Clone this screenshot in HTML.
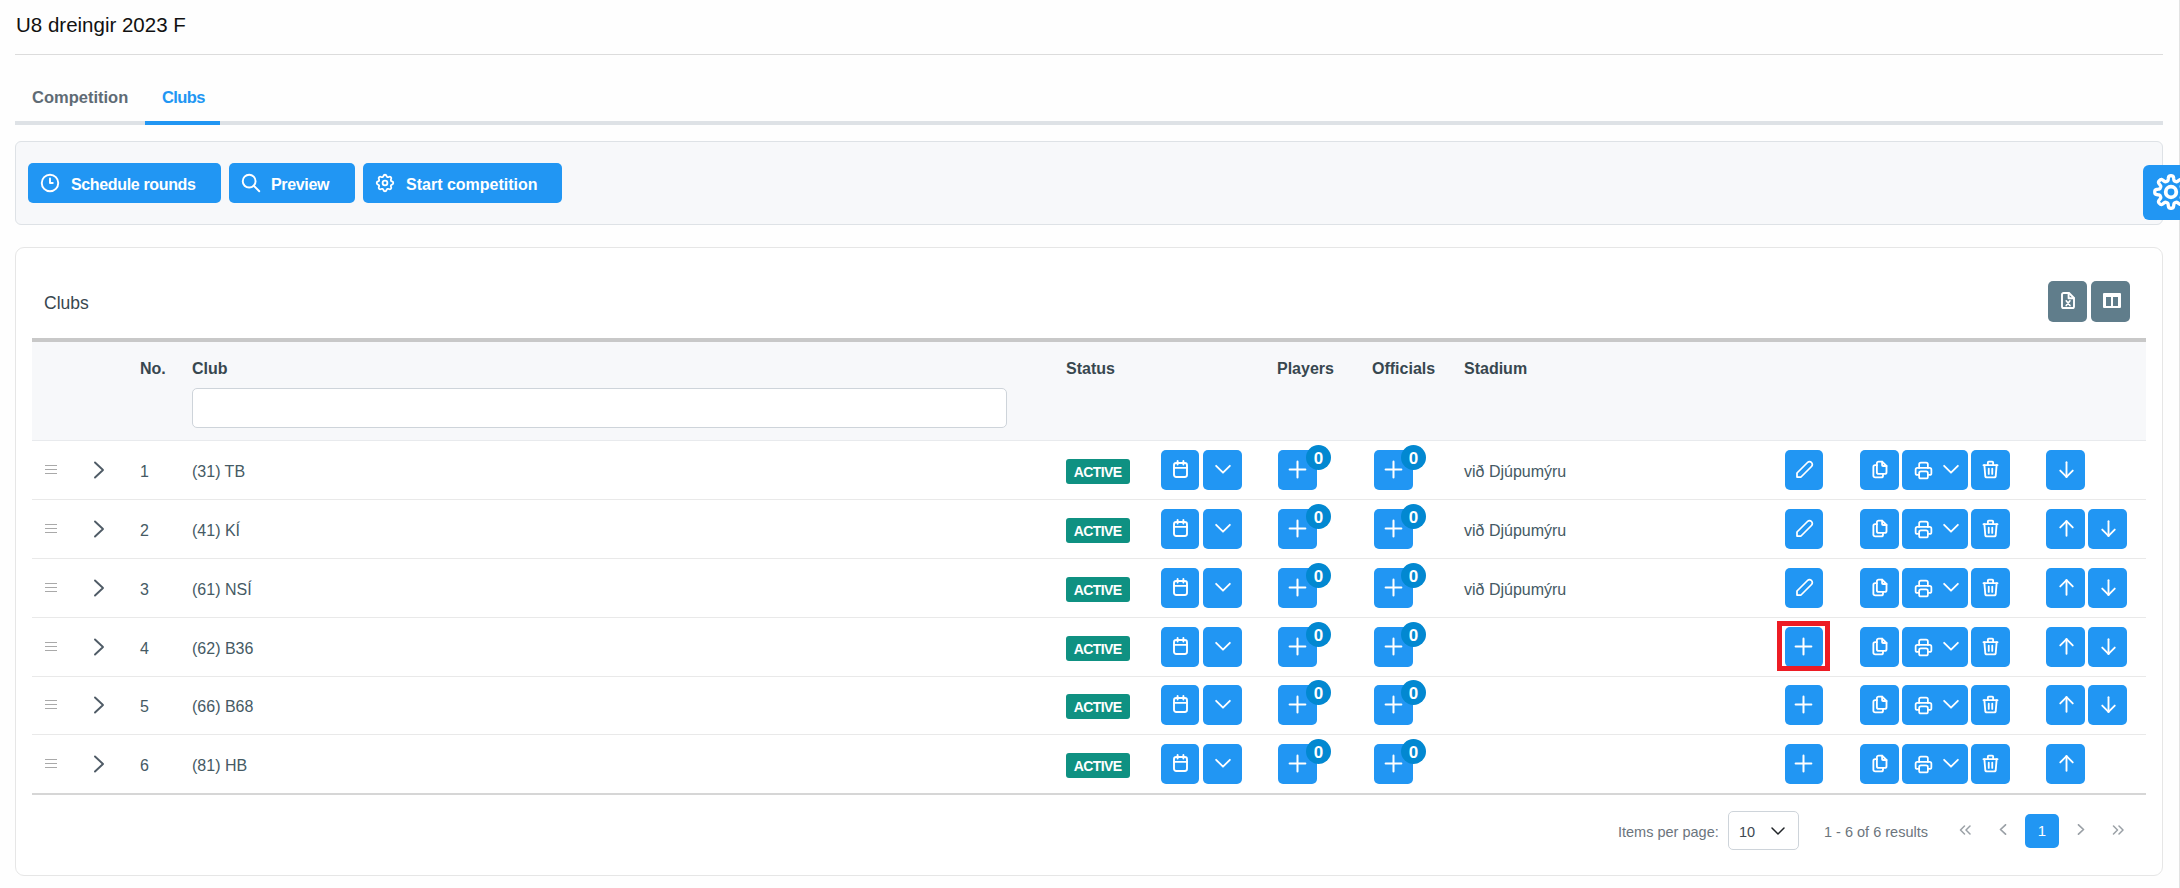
<!DOCTYPE html>
<html><head><meta charset="utf-8"><title>Clubs</title><style>
*{box-sizing:border-box;margin:0;padding:0}
html,body{width:2180px;height:888px;overflow:hidden;background:#fefefe;font-family:"Liberation Sans",sans-serif;position:relative}
div,svg.ic{position:absolute}
.title{left:16px;top:10px;font-size:20.5px;line-height:30px;color:#111}
.hr1{left:15px;top:54px;width:2148px;height:1px;background:#dcdcdc}
.tab1,.tab2{top:86px;font-size:16.5px;font-weight:700;line-height:22px;color:#5f6b75}
.tab1{left:32px}
.tab2{left:162px;color:#2196f3;letter-spacing:-0.6px}
.tabline{left:15px;top:121px;width:2148px;height:4px;background:#dee2e6}
.tabactive{left:145px;top:121px;width:75px;height:4px;background:#2196f3}
.toolbar{left:15px;top:141px;width:2148px;height:84px;background:#f7f8fa;border:1px solid #dee2e6;border-radius:6px}
.btn{background:#2196f3;border-radius:5px}
.gbtn{background:#607d8b;border-radius:5px}
.btxt{top:174px;font-size:16px;font-weight:700;color:#fff;line-height:22px;letter-spacing:-0.35px}
.gearbtn{left:2143px;top:165px;width:60px;height:55px;background:#2196f3;border-radius:6px}
.vline{left:2179px;top:0;width:1px;height:888px;background:#e2e2e2}
.card{left:15px;top:247px;width:2148px;height:629px;background:#fff;border:1px solid #e6e6e6;border-radius:9px}
.cardtitle{left:44px;top:292px;font-size:17.5px;line-height:22px;color:#37474f}
.colsicon{left:2103px;top:293px;width:18px;height:15px;border:3px solid #fff;border-top-width:4px;border-bottom-width:2px;border-radius:1px}
.colsicon::after{content:"";position:absolute;left:5px;top:0;width:2px;height:9px;background:#fff}
.thtop{left:32px;top:338px;width:2114px;height:4px;background:#c8c8c8}
.thbg{left:32px;top:342px;width:2114px;height:98px;background:#f7f8fa}
.thline{left:32px;top:440px;width:2114px;height:1px;background:#e8eaed}
.th{top:358px;font-size:16px;font-weight:700;line-height:22px;color:#37474f}
.filter{left:192px;top:388px;width:815px;height:40px;background:#fff;border:1px solid #ced4da;border-radius:5px}
.rline{left:32px;width:2114px;height:1px;background:#e9e9e9}
.drag{left:45px;width:12px;height:1.3px;background:#a9a9a9}
.td{height:58px;line-height:58px;font-size:16px;color:#455a64}
.badge{left:1066px;width:64px;height:25px;background:#0f9182;border-radius:3px;color:#fff;font-size:14px;font-weight:700;line-height:26px;text-align:center;letter-spacing:-0.6px;text-indent:-0.6px}
.cnt{width:25px;height:25px;border-radius:50%;background:#0288d1;color:#fff;font-size:17px;font-weight:700;line-height:27px;text-align:center}
.redbox{left:1777px;top:621px;width:53px;height:50px;border:5px solid #ed1c24}
.tbottom{left:32px;top:793px;width:2114px;height:2px;background:#d6d6d6}
.ipp{left:1618px;top:821px;font-size:14.5px;line-height:22px;color:#6c757d}
.sel{left:1728px;top:811px;width:71px;height:39px;border:1px solid #ced4da;border-radius:5px;background:#fff}
.seltxt{left:1739px;top:821px;font-size:14.5px;line-height:22px;color:#3d4852}
.results{left:1824px;top:821px;font-size:14.5px;line-height:22px;color:#6c757d}
.pg{top:817px;font-size:20px;line-height:26px;color:#9aa0a6}
.pgbtn{left:2025px;top:814px;width:34px;height:34px;background:#2196f3;border-radius:5px;color:#fff;font-size:15px;line-height:34px;text-align:center}
</style></head>
<body>
<div class="title">U8 dreingir 2023 F</div><div class="hr1"></div><div class="tab1">Competition</div><div class="tab2">Clubs</div><div class="tabline"></div><div class="tabactive"></div><div class="toolbar"></div><div class="btn" style="left:28px;top:163px;width:193px;height:40px"></div><svg class="ic" style="left:39px;top:172px;width:22px;height:22px" viewBox="0 0 24 24" fill="none" stroke="#fff" stroke-width="2.1" stroke-linecap="round" stroke-linejoin="round"><path d="M3 12a9 9 0 1 0 18 0a9 9 0 0 0 -18 0"/><path d="M12 7v5h3"/></svg><div class="btxt" style="left:71px">Schedule rounds</div><div class="btn" style="left:229px;top:163px;width:126px;height:40px"></div><svg class="ic" style="left:240px;top:172px;width:22px;height:22px" viewBox="0 0 24 24" fill="none" stroke="#fff" stroke-width="2.1" stroke-linecap="round" stroke-linejoin="round"><path d="M3 10a7 7 0 1 0 14 0a7 7 0 1 0 -14 0"/><path d="M21 21l-6 -6"/></svg><div class="btxt" style="left:271px">Preview</div><div class="btn" style="left:363px;top:163px;width:199px;height:40px"></div><svg class="ic" style="left:374px;top:172px;width:22px;height:22px" viewBox="0 0 24 24" fill="none" stroke="#fff" stroke-width="2.0" stroke-linecap="round" stroke-linejoin="round"><path d="M10.325 4.317c.426 -1.756 2.924 -1.756 3.35 0a1.724 1.724 0 0 0 2.573 1.066c1.543 -.94 3.31 .826 2.37 2.37a1.724 1.724 0 0 0 1.065 2.572c1.756 .426 1.756 2.924 0 3.35a1.724 1.724 0 0 0 -1.066 2.573c.94 1.543 -.826 3.31 -2.37 2.37a1.724 1.724 0 0 0 -2.572 1.065c-.426 1.756 -2.924 1.756 -3.35 0a1.724 1.724 0 0 0 -2.573 -1.066c-1.543 .94 -3.31 -.826 -2.37 -2.37a1.724 1.724 0 0 0 -1.065 -2.572c-1.756 -.426 -1.756 -2.924 0 -3.35a1.724 1.724 0 0 0 1.066 -2.573c-.94 -1.543 .826 -3.31 2.37 -2.37c1 .608 2.296 .07 2.572 -1.065z"/><circle cx="12" cy="12" r="2.6"/></svg><div class="btxt" style="left:406px;letter-spacing:0">Start competition</div><div class="vline"></div><div class="gearbtn"></div><svg class="ic" style="left:2149px;top:170px;width:44px;height:44px" viewBox="0 0 44 44" fill="none" stroke="#fff" stroke-width="3.3" stroke-linecap="round" stroke-linejoin="round"><path d="M22.00 5.75 L22.43 5.76 L22.85 5.80 L23.27 5.88 L23.68 6.02 L24.06 6.32 L24.39 6.88 L24.63 7.84 L24.76 9.00 L24.89 9.95 L25.08 10.52 L25.30 10.84 L25.56 11.04 L25.83 11.18 L26.11 11.30 L26.38 11.42 L26.66 11.53 L26.94 11.64 L27.23 11.73 L27.55 11.77 L27.94 11.71 L28.48 11.43 L29.24 10.85 L30.16 10.13 L31.00 9.62 L31.63 9.45 L32.11 9.52 L32.50 9.70 L32.86 9.94 L33.18 10.22 L33.49 10.51 L33.78 10.82 L34.06 11.14 L34.30 11.50 L34.48 11.89 L34.55 12.37 L34.38 13.00 L33.87 13.84 L33.15 14.76 L32.57 15.52 L32.29 16.06 L32.23 16.45 L32.27 16.77 L32.36 17.06 L32.47 17.34 L32.58 17.62 L32.70 17.89 L32.82 18.17 L32.96 18.44 L33.16 18.70 L33.48 18.92 L34.05 19.11 L35.00 19.24 L36.16 19.37 L37.12 19.61 L37.68 19.94 L37.98 20.32 L38.12 20.73 L38.20 21.15 L38.24 21.57 L38.25 22.00 L38.24 22.43 L38.20 22.85 L38.12 23.27 L37.98 23.68 L37.68 24.06 L37.12 24.39 L36.16 24.63 L35.00 24.76 L34.05 24.89 L33.48 25.08 L33.16 25.30 L32.96 25.56 L32.82 25.83 L32.70 26.11 L32.58 26.38 L32.47 26.66 L32.36 26.94 L32.27 27.23 L32.23 27.55 L32.29 27.94 L32.57 28.48 L33.15 29.24 L33.87 30.16 L34.38 31.00 L34.55 31.63 L34.48 32.11 L34.30 32.50 L34.06 32.86 L33.78 33.18 L33.49 33.49 L33.18 33.78 L32.86 34.06 L32.50 34.30 L32.11 34.48 L31.63 34.55 L31.00 34.38 L30.16 33.87 L29.24 33.15 L28.48 32.57 L27.94 32.29 L27.55 32.23 L27.23 32.27 L26.94 32.36 L26.66 32.47 L26.38 32.58 L26.11 32.70 L25.83 32.82 L25.56 32.96 L25.30 33.16 L25.08 33.48 L24.89 34.05 L24.76 35.00 L24.63 36.16 L24.39 37.12 L24.06 37.68 L23.68 37.98 L23.27 38.12 L22.85 38.20 L22.43 38.24 L22.00 38.25 L21.57 38.24 L21.15 38.20 L20.73 38.12 L20.32 37.98 L19.94 37.68 L19.61 37.12 L19.37 36.16 L19.24 35.00 L19.11 34.05 L18.92 33.48 L18.70 33.16 L18.44 32.96 L18.17 32.82 L17.89 32.70 L17.62 32.58 L17.34 32.47 L17.06 32.36 L16.77 32.27 L16.45 32.23 L16.06 32.29 L15.52 32.57 L14.76 33.15 L13.84 33.87 L13.00 34.38 L12.37 34.55 L11.89 34.48 L11.50 34.30 L11.14 34.06 L10.82 33.78 L10.51 33.49 L10.22 33.18 L9.94 32.86 L9.70 32.50 L9.52 32.11 L9.45 31.63 L9.62 31.00 L10.13 30.16 L10.85 29.24 L11.43 28.48 L11.71 27.94 L11.77 27.55 L11.73 27.23 L11.64 26.94 L11.53 26.66 L11.42 26.38 L11.30 26.11 L11.18 25.83 L11.04 25.56 L10.84 25.30 L10.52 25.08 L9.95 24.89 L9.00 24.76 L7.84 24.63 L6.88 24.39 L6.32 24.06 L6.02 23.68 L5.88 23.27 L5.80 22.85 L5.76 22.43 L5.75 22.00 L5.76 21.57 L5.80 21.15 L5.88 20.73 L6.02 20.32 L6.32 19.94 L6.88 19.61 L7.84 19.37 L9.00 19.24 L9.95 19.11 L10.52 18.92 L10.84 18.70 L11.04 18.44 L11.18 18.17 L11.30 17.89 L11.42 17.62 L11.53 17.34 L11.64 17.06 L11.73 16.77 L11.77 16.45 L11.71 16.06 L11.43 15.52 L10.85 14.76 L10.13 13.84 L9.62 13.00 L9.45 12.37 L9.52 11.89 L9.70 11.50 L9.94 11.14 L10.22 10.82 L10.51 10.51 L10.82 10.22 L11.14 9.94 L11.50 9.70 L11.89 9.52 L12.37 9.45 L13.00 9.62 L13.84 10.13 L14.76 10.85 L15.52 11.43 L16.06 11.71 L16.45 11.77 L16.77 11.73 L17.06 11.64 L17.34 11.53 L17.62 11.42 L17.89 11.30 L18.17 11.18 L18.44 11.04 L18.70 10.84 L18.92 10.52 L19.11 9.95 L19.24 9.00 L19.37 7.84 L19.61 6.88 L19.94 6.32 L20.32 6.02 L20.73 5.88 L21.15 5.80 L21.57 5.76Z"/><circle cx="22" cy="22" r="5.3" stroke-width="3.8"/></svg><div class="card"></div><div class="cardtitle">Clubs</div><div class="gbtn" style="left:2048px;top:281px;width:39px;height:41px"></div><svg class="ic" style="left:2061px;top:292px;width:14px;height:17px" viewBox="0 0 14 17" fill="none" stroke="#fff" stroke-width="1.9" stroke-linecap="round" stroke-linejoin="round"><path d="M1 2.6a1.6 1.6 0 0 1 1.6 -1.6H8L13 6V14.4a1.6 1.6 0 0 1 -1.6 1.6H2.6a1.6 1.6 0 0 1 -1.6 -1.6Z"/><path d="M7.6 1.2V6.2H12.8"/><path d="M5.2 8.8L9 13.6M9 8.8L5.2 13.6" stroke-width="1.6"/></svg><div class="gbtn" style="left:2091px;top:281px;width:39px;height:41px"></div><div class="colsicon"></div><div class="thtop"></div><div class="thbg"></div><div class="thline"></div><div class="th" style="left:140px">No.</div><div class="th" style="left:192px">Club</div><div class="th" style="left:1066px">Status</div><div class="th" style="left:1277px">Players</div><div class="th" style="left:1372px">Officials</div><div class="th" style="left:1464px">Stadium</div><div class="filter"></div><div class="rline" style="top:499px"></div><div class="drag" style="top:465px"></div><div class="drag" style="top:469px"></div><div class="drag" style="top:473px"></div><svg class="ic" style="left:93px;top:461px;width:12px;height:18px" viewBox="0 0 12 18" fill="none" stroke="#4f5b66" stroke-width="1.9" stroke-linecap="round" stroke-linejoin="round"><path d="M2 1.5L10 9L2 16.5"/></svg><div class="td" style="left:140px;top:443px">1</div><div class="td" style="left:192px;top:443px">(31) TB</div><div class="badge" style="top:459px">ACTIVE</div><div class="btn" style="left:1161px;top:450px;width:38px;height:40px"></div><svg class="ic" style="left:1173px;top:460px;width:15px;height:18px" viewBox="0 0 15 18" fill="none" stroke="#fff" stroke-width="1.9" stroke-linecap="round" stroke-linejoin="round"><rect x="1" y="3" width="13" height="14" rx="2.2"/><path d="M4.6 1V4.6M10.4 1V4.6M1 7.9H14"/></svg><div class="btn" style="left:1203px;top:450px;width:39px;height:40px"></div><svg class="ic" style="left:1212px;top:458px;width:22px;height:22px" viewBox="0 0 24 24" fill="none" stroke="#fff" stroke-width="2.0" stroke-linecap="round" stroke-linejoin="round"><path d="M4.5 8.5l7.5 7.5l7.5 -7.5"/></svg><div class="btn" style="left:1278px;top:450px;width:39px;height:40px"></div><svg class="ic" style="left:1284px;top:456px;width:27px;height:27px" viewBox="0 0 24 24" fill="none" stroke="#fff" stroke-width="1.8" stroke-linecap="round" stroke-linejoin="round"><path d="M12 5l0 14"/><path d="M5 12l14 0"/></svg><div class="cnt" style="left:1306px;top:445px">0</div><div class="btn" style="left:1374px;top:450px;width:39px;height:40px"></div><svg class="ic" style="left:1380px;top:456px;width:27px;height:27px" viewBox="0 0 24 24" fill="none" stroke="#fff" stroke-width="1.8" stroke-linecap="round" stroke-linejoin="round"><path d="M12 5l0 14"/><path d="M5 12l14 0"/></svg><div class="cnt" style="left:1401px;top:445px">0</div><div class="td" style="left:1464px;top:443px">við Djúpumýru</div><div class="btn" style="left:1785px;top:450px;width:38px;height:40px"></div><svg class="ic" style="left:1793px;top:457px;width:24px;height:24px" viewBox="0 0 24 24" fill="none" stroke="#fff" stroke-width="1.75" stroke-linecap="round" stroke-linejoin="round"><path d="M4 20h4l10.5 -10.5a2.828 2.828 0 1 0 -4 -4l-10.5 10.5v4"/></svg><div class="btn" style="left:1860px;top:450px;width:39px;height:40px"></div><svg class="ic" style="left:1869px;top:459px;width:21px;height:21px" viewBox="0 0 24 24" fill="none" stroke="#fff" stroke-width="2.1" stroke-linecap="round" stroke-linejoin="round"><path d="M15 3v4a1 1 0 0 0 1 1h4"/><path d="M18 17h-7a2 2 0 0 1 -2 -2v-10a2 2 0 0 1 2 -2h4l5 5v7a2 2 0 0 1 -2 2z"/><path d="M16 17v2a2 2 0 0 1 -2 2h-7a2 2 0 0 1 -2 -2v-10a2 2 0 0 1 2 -2h2"/></svg><div class="btn" style="left:1902px;top:450px;width:66px;height:40px"></div><svg class="ic" style="left:1913px;top:460px;width:21px;height:21px" viewBox="0 0 24 24" fill="none" stroke="#fff" stroke-width="2.0" stroke-linecap="round" stroke-linejoin="round"><path d="M17 17h2a2 2 0 0 0 2 -2v-4a2 2 0 0 0 -2 -2h-14a2 2 0 0 0 -2 2v4a2 2 0 0 0 2 2h2"/><path d="M17 9v-4a2 2 0 0 0 -2 -2h-6a2 2 0 0 0 -2 2v4"/><path d="M7 15a2 2 0 0 1 2 -2h6a2 2 0 0 1 2 2v4a2 2 0 0 1 -2 2h-6a2 2 0 0 1 -2 -2z"/></svg><svg class="ic" style="left:1940px;top:458px;width:22px;height:22px" viewBox="0 0 24 24" fill="none" stroke="#fff" stroke-width="2.0" stroke-linecap="round" stroke-linejoin="round"><path d="M4.5 8.5l7.5 7.5l7.5 -7.5"/></svg><div class="btn" style="left:1971px;top:450px;width:39px;height:40px"></div><svg class="ic" style="left:1980px;top:459px;width:21px;height:21px" viewBox="0 0 24 24" fill="none" stroke="#fff" stroke-width="2.1" stroke-linecap="round" stroke-linejoin="round"><path d="M4 7l16 0"/><path d="M10 11l0 6"/><path d="M14 11l0 6"/><path d="M5 7l1 12a2 2 0 0 0 2 2h8a2 2 0 0 0 2 -2l1 -12"/><path d="M9 7v-3a1 1 0 0 1 1 -1h4a1 1 0 0 1 1 1v3"/></svg><div class="btn" style="left:2046px;top:450px;width:39px;height:40px"></div><svg class="ic" style="left:2054px;top:457px;width:25px;height:25px" viewBox="0 0 24 24" fill="none" stroke="#fff" stroke-width="1.8" stroke-linecap="round" stroke-linejoin="round"><path d="M12 5l0 14"/><path d="M18 13l-6 6"/><path d="M6 13l6 6"/></svg><div class="rline" style="top:558px"></div><div class="drag" style="top:524px"></div><div class="drag" style="top:528px"></div><div class="drag" style="top:532px"></div><svg class="ic" style="left:93px;top:520px;width:12px;height:18px" viewBox="0 0 12 18" fill="none" stroke="#4f5b66" stroke-width="1.9" stroke-linecap="round" stroke-linejoin="round"><path d="M2 1.5L10 9L2 16.5"/></svg><div class="td" style="left:140px;top:502px">2</div><div class="td" style="left:192px;top:502px">(41) KÍ</div><div class="badge" style="top:518px">ACTIVE</div><div class="btn" style="left:1161px;top:509px;width:38px;height:40px"></div><svg class="ic" style="left:1173px;top:519px;width:15px;height:18px" viewBox="0 0 15 18" fill="none" stroke="#fff" stroke-width="1.9" stroke-linecap="round" stroke-linejoin="round"><rect x="1" y="3" width="13" height="14" rx="2.2"/><path d="M4.6 1V4.6M10.4 1V4.6M1 7.9H14"/></svg><div class="btn" style="left:1203px;top:509px;width:39px;height:40px"></div><svg class="ic" style="left:1212px;top:517px;width:22px;height:22px" viewBox="0 0 24 24" fill="none" stroke="#fff" stroke-width="2.0" stroke-linecap="round" stroke-linejoin="round"><path d="M4.5 8.5l7.5 7.5l7.5 -7.5"/></svg><div class="btn" style="left:1278px;top:509px;width:39px;height:40px"></div><svg class="ic" style="left:1284px;top:515px;width:27px;height:27px" viewBox="0 0 24 24" fill="none" stroke="#fff" stroke-width="1.8" stroke-linecap="round" stroke-linejoin="round"><path d="M12 5l0 14"/><path d="M5 12l14 0"/></svg><div class="cnt" style="left:1306px;top:504px">0</div><div class="btn" style="left:1374px;top:509px;width:39px;height:40px"></div><svg class="ic" style="left:1380px;top:515px;width:27px;height:27px" viewBox="0 0 24 24" fill="none" stroke="#fff" stroke-width="1.8" stroke-linecap="round" stroke-linejoin="round"><path d="M12 5l0 14"/><path d="M5 12l14 0"/></svg><div class="cnt" style="left:1401px;top:504px">0</div><div class="td" style="left:1464px;top:502px">við Djúpumýru</div><div class="btn" style="left:1785px;top:509px;width:38px;height:40px"></div><svg class="ic" style="left:1793px;top:516px;width:24px;height:24px" viewBox="0 0 24 24" fill="none" stroke="#fff" stroke-width="1.75" stroke-linecap="round" stroke-linejoin="round"><path d="M4 20h4l10.5 -10.5a2.828 2.828 0 1 0 -4 -4l-10.5 10.5v4"/></svg><div class="btn" style="left:1860px;top:509px;width:39px;height:40px"></div><svg class="ic" style="left:1869px;top:518px;width:21px;height:21px" viewBox="0 0 24 24" fill="none" stroke="#fff" stroke-width="2.1" stroke-linecap="round" stroke-linejoin="round"><path d="M15 3v4a1 1 0 0 0 1 1h4"/><path d="M18 17h-7a2 2 0 0 1 -2 -2v-10a2 2 0 0 1 2 -2h4l5 5v7a2 2 0 0 1 -2 2z"/><path d="M16 17v2a2 2 0 0 1 -2 2h-7a2 2 0 0 1 -2 -2v-10a2 2 0 0 1 2 -2h2"/></svg><div class="btn" style="left:1902px;top:509px;width:66px;height:40px"></div><svg class="ic" style="left:1913px;top:519px;width:21px;height:21px" viewBox="0 0 24 24" fill="none" stroke="#fff" stroke-width="2.0" stroke-linecap="round" stroke-linejoin="round"><path d="M17 17h2a2 2 0 0 0 2 -2v-4a2 2 0 0 0 -2 -2h-14a2 2 0 0 0 -2 2v4a2 2 0 0 0 2 2h2"/><path d="M17 9v-4a2 2 0 0 0 -2 -2h-6a2 2 0 0 0 -2 2v4"/><path d="M7 15a2 2 0 0 1 2 -2h6a2 2 0 0 1 2 2v4a2 2 0 0 1 -2 2h-6a2 2 0 0 1 -2 -2z"/></svg><svg class="ic" style="left:1940px;top:517px;width:22px;height:22px" viewBox="0 0 24 24" fill="none" stroke="#fff" stroke-width="2.0" stroke-linecap="round" stroke-linejoin="round"><path d="M4.5 8.5l7.5 7.5l7.5 -7.5"/></svg><div class="btn" style="left:1971px;top:509px;width:39px;height:40px"></div><svg class="ic" style="left:1980px;top:518px;width:21px;height:21px" viewBox="0 0 24 24" fill="none" stroke="#fff" stroke-width="2.1" stroke-linecap="round" stroke-linejoin="round"><path d="M4 7l16 0"/><path d="M10 11l0 6"/><path d="M14 11l0 6"/><path d="M5 7l1 12a2 2 0 0 0 2 2h8a2 2 0 0 0 2 -2l1 -12"/><path d="M9 7v-3a1 1 0 0 1 1 -1h4a1 1 0 0 1 1 1v3"/></svg><div class="btn" style="left:2046px;top:509px;width:39px;height:40px"></div><svg class="ic" style="left:2054px;top:516px;width:25px;height:25px" viewBox="0 0 24 24" fill="none" stroke="#fff" stroke-width="1.8" stroke-linecap="round" stroke-linejoin="round"><path d="M12 5l0 14"/><path d="M18 11l-6 -6"/><path d="M6 11l6 -6"/></svg><div class="btn" style="left:2088px;top:509px;width:39px;height:40px"></div><svg class="ic" style="left:2096px;top:516px;width:25px;height:25px" viewBox="0 0 24 24" fill="none" stroke="#fff" stroke-width="1.8" stroke-linecap="round" stroke-linejoin="round"><path d="M12 5l0 14"/><path d="M18 13l-6 6"/><path d="M6 13l6 6"/></svg><div class="rline" style="top:617px"></div><div class="drag" style="top:583px"></div><div class="drag" style="top:587px"></div><div class="drag" style="top:591px"></div><svg class="ic" style="left:93px;top:579px;width:12px;height:18px" viewBox="0 0 12 18" fill="none" stroke="#4f5b66" stroke-width="1.9" stroke-linecap="round" stroke-linejoin="round"><path d="M2 1.5L10 9L2 16.5"/></svg><div class="td" style="left:140px;top:561px">3</div><div class="td" style="left:192px;top:561px">(61) NSÍ</div><div class="badge" style="top:577px">ACTIVE</div><div class="btn" style="left:1161px;top:568px;width:38px;height:40px"></div><svg class="ic" style="left:1173px;top:578px;width:15px;height:18px" viewBox="0 0 15 18" fill="none" stroke="#fff" stroke-width="1.9" stroke-linecap="round" stroke-linejoin="round"><rect x="1" y="3" width="13" height="14" rx="2.2"/><path d="M4.6 1V4.6M10.4 1V4.6M1 7.9H14"/></svg><div class="btn" style="left:1203px;top:568px;width:39px;height:40px"></div><svg class="ic" style="left:1212px;top:576px;width:22px;height:22px" viewBox="0 0 24 24" fill="none" stroke="#fff" stroke-width="2.0" stroke-linecap="round" stroke-linejoin="round"><path d="M4.5 8.5l7.5 7.5l7.5 -7.5"/></svg><div class="btn" style="left:1278px;top:568px;width:39px;height:40px"></div><svg class="ic" style="left:1284px;top:574px;width:27px;height:27px" viewBox="0 0 24 24" fill="none" stroke="#fff" stroke-width="1.8" stroke-linecap="round" stroke-linejoin="round"><path d="M12 5l0 14"/><path d="M5 12l14 0"/></svg><div class="cnt" style="left:1306px;top:563px">0</div><div class="btn" style="left:1374px;top:568px;width:39px;height:40px"></div><svg class="ic" style="left:1380px;top:574px;width:27px;height:27px" viewBox="0 0 24 24" fill="none" stroke="#fff" stroke-width="1.8" stroke-linecap="round" stroke-linejoin="round"><path d="M12 5l0 14"/><path d="M5 12l14 0"/></svg><div class="cnt" style="left:1401px;top:563px">0</div><div class="td" style="left:1464px;top:561px">við Djúpumýru</div><div class="btn" style="left:1785px;top:568px;width:38px;height:40px"></div><svg class="ic" style="left:1793px;top:575px;width:24px;height:24px" viewBox="0 0 24 24" fill="none" stroke="#fff" stroke-width="1.75" stroke-linecap="round" stroke-linejoin="round"><path d="M4 20h4l10.5 -10.5a2.828 2.828 0 1 0 -4 -4l-10.5 10.5v4"/></svg><div class="btn" style="left:1860px;top:568px;width:39px;height:40px"></div><svg class="ic" style="left:1869px;top:577px;width:21px;height:21px" viewBox="0 0 24 24" fill="none" stroke="#fff" stroke-width="2.1" stroke-linecap="round" stroke-linejoin="round"><path d="M15 3v4a1 1 0 0 0 1 1h4"/><path d="M18 17h-7a2 2 0 0 1 -2 -2v-10a2 2 0 0 1 2 -2h4l5 5v7a2 2 0 0 1 -2 2z"/><path d="M16 17v2a2 2 0 0 1 -2 2h-7a2 2 0 0 1 -2 -2v-10a2 2 0 0 1 2 -2h2"/></svg><div class="btn" style="left:1902px;top:568px;width:66px;height:40px"></div><svg class="ic" style="left:1913px;top:578px;width:21px;height:21px" viewBox="0 0 24 24" fill="none" stroke="#fff" stroke-width="2.0" stroke-linecap="round" stroke-linejoin="round"><path d="M17 17h2a2 2 0 0 0 2 -2v-4a2 2 0 0 0 -2 -2h-14a2 2 0 0 0 -2 2v4a2 2 0 0 0 2 2h2"/><path d="M17 9v-4a2 2 0 0 0 -2 -2h-6a2 2 0 0 0 -2 2v4"/><path d="M7 15a2 2 0 0 1 2 -2h6a2 2 0 0 1 2 2v4a2 2 0 0 1 -2 2h-6a2 2 0 0 1 -2 -2z"/></svg><svg class="ic" style="left:1940px;top:576px;width:22px;height:22px" viewBox="0 0 24 24" fill="none" stroke="#fff" stroke-width="2.0" stroke-linecap="round" stroke-linejoin="round"><path d="M4.5 8.5l7.5 7.5l7.5 -7.5"/></svg><div class="btn" style="left:1971px;top:568px;width:39px;height:40px"></div><svg class="ic" style="left:1980px;top:577px;width:21px;height:21px" viewBox="0 0 24 24" fill="none" stroke="#fff" stroke-width="2.1" stroke-linecap="round" stroke-linejoin="round"><path d="M4 7l16 0"/><path d="M10 11l0 6"/><path d="M14 11l0 6"/><path d="M5 7l1 12a2 2 0 0 0 2 2h8a2 2 0 0 0 2 -2l1 -12"/><path d="M9 7v-3a1 1 0 0 1 1 -1h4a1 1 0 0 1 1 1v3"/></svg><div class="btn" style="left:2046px;top:568px;width:39px;height:40px"></div><svg class="ic" style="left:2054px;top:575px;width:25px;height:25px" viewBox="0 0 24 24" fill="none" stroke="#fff" stroke-width="1.8" stroke-linecap="round" stroke-linejoin="round"><path d="M12 5l0 14"/><path d="M18 11l-6 -6"/><path d="M6 11l6 -6"/></svg><div class="btn" style="left:2088px;top:568px;width:39px;height:40px"></div><svg class="ic" style="left:2096px;top:575px;width:25px;height:25px" viewBox="0 0 24 24" fill="none" stroke="#fff" stroke-width="1.8" stroke-linecap="round" stroke-linejoin="round"><path d="M12 5l0 14"/><path d="M18 13l-6 6"/><path d="M6 13l6 6"/></svg><div class="rline" style="top:676px"></div><div class="drag" style="top:642px"></div><div class="drag" style="top:646px"></div><div class="drag" style="top:650px"></div><svg class="ic" style="left:93px;top:638px;width:12px;height:18px" viewBox="0 0 12 18" fill="none" stroke="#4f5b66" stroke-width="1.9" stroke-linecap="round" stroke-linejoin="round"><path d="M2 1.5L10 9L2 16.5"/></svg><div class="td" style="left:140px;top:620px">4</div><div class="td" style="left:192px;top:620px">(62) B36</div><div class="badge" style="top:636px">ACTIVE</div><div class="btn" style="left:1161px;top:627px;width:38px;height:40px"></div><svg class="ic" style="left:1173px;top:637px;width:15px;height:18px" viewBox="0 0 15 18" fill="none" stroke="#fff" stroke-width="1.9" stroke-linecap="round" stroke-linejoin="round"><rect x="1" y="3" width="13" height="14" rx="2.2"/><path d="M4.6 1V4.6M10.4 1V4.6M1 7.9H14"/></svg><div class="btn" style="left:1203px;top:627px;width:39px;height:40px"></div><svg class="ic" style="left:1212px;top:635px;width:22px;height:22px" viewBox="0 0 24 24" fill="none" stroke="#fff" stroke-width="2.0" stroke-linecap="round" stroke-linejoin="round"><path d="M4.5 8.5l7.5 7.5l7.5 -7.5"/></svg><div class="btn" style="left:1278px;top:627px;width:39px;height:40px"></div><svg class="ic" style="left:1284px;top:633px;width:27px;height:27px" viewBox="0 0 24 24" fill="none" stroke="#fff" stroke-width="1.8" stroke-linecap="round" stroke-linejoin="round"><path d="M12 5l0 14"/><path d="M5 12l14 0"/></svg><div class="cnt" style="left:1306px;top:622px">0</div><div class="btn" style="left:1374px;top:627px;width:39px;height:40px"></div><svg class="ic" style="left:1380px;top:633px;width:27px;height:27px" viewBox="0 0 24 24" fill="none" stroke="#fff" stroke-width="1.8" stroke-linecap="round" stroke-linejoin="round"><path d="M12 5l0 14"/><path d="M5 12l14 0"/></svg><div class="cnt" style="left:1401px;top:622px">0</div><div class="btn" style="left:1785px;top:627px;width:38px;height:40px"></div><svg class="ic" style="left:1790px;top:633px;width:27px;height:27px" viewBox="0 0 24 24" fill="none" stroke="#fff" stroke-width="1.8" stroke-linecap="round" stroke-linejoin="round"><path d="M12 5l0 14"/><path d="M5 12l14 0"/></svg><div class="btn" style="left:1860px;top:627px;width:39px;height:40px"></div><svg class="ic" style="left:1869px;top:636px;width:21px;height:21px" viewBox="0 0 24 24" fill="none" stroke="#fff" stroke-width="2.1" stroke-linecap="round" stroke-linejoin="round"><path d="M15 3v4a1 1 0 0 0 1 1h4"/><path d="M18 17h-7a2 2 0 0 1 -2 -2v-10a2 2 0 0 1 2 -2h4l5 5v7a2 2 0 0 1 -2 2z"/><path d="M16 17v2a2 2 0 0 1 -2 2h-7a2 2 0 0 1 -2 -2v-10a2 2 0 0 1 2 -2h2"/></svg><div class="btn" style="left:1902px;top:627px;width:66px;height:40px"></div><svg class="ic" style="left:1913px;top:637px;width:21px;height:21px" viewBox="0 0 24 24" fill="none" stroke="#fff" stroke-width="2.0" stroke-linecap="round" stroke-linejoin="round"><path d="M17 17h2a2 2 0 0 0 2 -2v-4a2 2 0 0 0 -2 -2h-14a2 2 0 0 0 -2 2v4a2 2 0 0 0 2 2h2"/><path d="M17 9v-4a2 2 0 0 0 -2 -2h-6a2 2 0 0 0 -2 2v4"/><path d="M7 15a2 2 0 0 1 2 -2h6a2 2 0 0 1 2 2v4a2 2 0 0 1 -2 2h-6a2 2 0 0 1 -2 -2z"/></svg><svg class="ic" style="left:1940px;top:635px;width:22px;height:22px" viewBox="0 0 24 24" fill="none" stroke="#fff" stroke-width="2.0" stroke-linecap="round" stroke-linejoin="round"><path d="M4.5 8.5l7.5 7.5l7.5 -7.5"/></svg><div class="btn" style="left:1971px;top:627px;width:39px;height:40px"></div><svg class="ic" style="left:1980px;top:636px;width:21px;height:21px" viewBox="0 0 24 24" fill="none" stroke="#fff" stroke-width="2.1" stroke-linecap="round" stroke-linejoin="round"><path d="M4 7l16 0"/><path d="M10 11l0 6"/><path d="M14 11l0 6"/><path d="M5 7l1 12a2 2 0 0 0 2 2h8a2 2 0 0 0 2 -2l1 -12"/><path d="M9 7v-3a1 1 0 0 1 1 -1h4a1 1 0 0 1 1 1v3"/></svg><div class="btn" style="left:2046px;top:627px;width:39px;height:40px"></div><svg class="ic" style="left:2054px;top:634px;width:25px;height:25px" viewBox="0 0 24 24" fill="none" stroke="#fff" stroke-width="1.8" stroke-linecap="round" stroke-linejoin="round"><path d="M12 5l0 14"/><path d="M18 11l-6 -6"/><path d="M6 11l6 -6"/></svg><div class="btn" style="left:2088px;top:627px;width:39px;height:40px"></div><svg class="ic" style="left:2096px;top:634px;width:25px;height:25px" viewBox="0 0 24 24" fill="none" stroke="#fff" stroke-width="1.8" stroke-linecap="round" stroke-linejoin="round"><path d="M12 5l0 14"/><path d="M18 13l-6 6"/><path d="M6 13l6 6"/></svg><div class="rline" style="top:734px"></div><div class="drag" style="top:700px"></div><div class="drag" style="top:704px"></div><div class="drag" style="top:708px"></div><svg class="ic" style="left:93px;top:696px;width:12px;height:18px" viewBox="0 0 12 18" fill="none" stroke="#4f5b66" stroke-width="1.9" stroke-linecap="round" stroke-linejoin="round"><path d="M2 1.5L10 9L2 16.5"/></svg><div class="td" style="left:140px;top:678px">5</div><div class="td" style="left:192px;top:678px">(66) B68</div><div class="badge" style="top:694px">ACTIVE</div><div class="btn" style="left:1161px;top:685px;width:38px;height:40px"></div><svg class="ic" style="left:1173px;top:695px;width:15px;height:18px" viewBox="0 0 15 18" fill="none" stroke="#fff" stroke-width="1.9" stroke-linecap="round" stroke-linejoin="round"><rect x="1" y="3" width="13" height="14" rx="2.2"/><path d="M4.6 1V4.6M10.4 1V4.6M1 7.9H14"/></svg><div class="btn" style="left:1203px;top:685px;width:39px;height:40px"></div><svg class="ic" style="left:1212px;top:693px;width:22px;height:22px" viewBox="0 0 24 24" fill="none" stroke="#fff" stroke-width="2.0" stroke-linecap="round" stroke-linejoin="round"><path d="M4.5 8.5l7.5 7.5l7.5 -7.5"/></svg><div class="btn" style="left:1278px;top:685px;width:39px;height:40px"></div><svg class="ic" style="left:1284px;top:691px;width:27px;height:27px" viewBox="0 0 24 24" fill="none" stroke="#fff" stroke-width="1.8" stroke-linecap="round" stroke-linejoin="round"><path d="M12 5l0 14"/><path d="M5 12l14 0"/></svg><div class="cnt" style="left:1306px;top:680px">0</div><div class="btn" style="left:1374px;top:685px;width:39px;height:40px"></div><svg class="ic" style="left:1380px;top:691px;width:27px;height:27px" viewBox="0 0 24 24" fill="none" stroke="#fff" stroke-width="1.8" stroke-linecap="round" stroke-linejoin="round"><path d="M12 5l0 14"/><path d="M5 12l14 0"/></svg><div class="cnt" style="left:1401px;top:680px">0</div><div class="btn" style="left:1785px;top:685px;width:38px;height:40px"></div><svg class="ic" style="left:1790px;top:691px;width:27px;height:27px" viewBox="0 0 24 24" fill="none" stroke="#fff" stroke-width="1.8" stroke-linecap="round" stroke-linejoin="round"><path d="M12 5l0 14"/><path d="M5 12l14 0"/></svg><div class="btn" style="left:1860px;top:685px;width:39px;height:40px"></div><svg class="ic" style="left:1869px;top:694px;width:21px;height:21px" viewBox="0 0 24 24" fill="none" stroke="#fff" stroke-width="2.1" stroke-linecap="round" stroke-linejoin="round"><path d="M15 3v4a1 1 0 0 0 1 1h4"/><path d="M18 17h-7a2 2 0 0 1 -2 -2v-10a2 2 0 0 1 2 -2h4l5 5v7a2 2 0 0 1 -2 2z"/><path d="M16 17v2a2 2 0 0 1 -2 2h-7a2 2 0 0 1 -2 -2v-10a2 2 0 0 1 2 -2h2"/></svg><div class="btn" style="left:1902px;top:685px;width:66px;height:40px"></div><svg class="ic" style="left:1913px;top:695px;width:21px;height:21px" viewBox="0 0 24 24" fill="none" stroke="#fff" stroke-width="2.0" stroke-linecap="round" stroke-linejoin="round"><path d="M17 17h2a2 2 0 0 0 2 -2v-4a2 2 0 0 0 -2 -2h-14a2 2 0 0 0 -2 2v4a2 2 0 0 0 2 2h2"/><path d="M17 9v-4a2 2 0 0 0 -2 -2h-6a2 2 0 0 0 -2 2v4"/><path d="M7 15a2 2 0 0 1 2 -2h6a2 2 0 0 1 2 2v4a2 2 0 0 1 -2 2h-6a2 2 0 0 1 -2 -2z"/></svg><svg class="ic" style="left:1940px;top:693px;width:22px;height:22px" viewBox="0 0 24 24" fill="none" stroke="#fff" stroke-width="2.0" stroke-linecap="round" stroke-linejoin="round"><path d="M4.5 8.5l7.5 7.5l7.5 -7.5"/></svg><div class="btn" style="left:1971px;top:685px;width:39px;height:40px"></div><svg class="ic" style="left:1980px;top:694px;width:21px;height:21px" viewBox="0 0 24 24" fill="none" stroke="#fff" stroke-width="2.1" stroke-linecap="round" stroke-linejoin="round"><path d="M4 7l16 0"/><path d="M10 11l0 6"/><path d="M14 11l0 6"/><path d="M5 7l1 12a2 2 0 0 0 2 2h8a2 2 0 0 0 2 -2l1 -12"/><path d="M9 7v-3a1 1 0 0 1 1 -1h4a1 1 0 0 1 1 1v3"/></svg><div class="btn" style="left:2046px;top:685px;width:39px;height:40px"></div><svg class="ic" style="left:2054px;top:692px;width:25px;height:25px" viewBox="0 0 24 24" fill="none" stroke="#fff" stroke-width="1.8" stroke-linecap="round" stroke-linejoin="round"><path d="M12 5l0 14"/><path d="M18 11l-6 -6"/><path d="M6 11l6 -6"/></svg><div class="btn" style="left:2088px;top:685px;width:39px;height:40px"></div><svg class="ic" style="left:2096px;top:692px;width:25px;height:25px" viewBox="0 0 24 24" fill="none" stroke="#fff" stroke-width="1.8" stroke-linecap="round" stroke-linejoin="round"><path d="M12 5l0 14"/><path d="M18 13l-6 6"/><path d="M6 13l6 6"/></svg><div class="drag" style="top:759px"></div><div class="drag" style="top:763px"></div><div class="drag" style="top:767px"></div><svg class="ic" style="left:93px;top:755px;width:12px;height:18px" viewBox="0 0 12 18" fill="none" stroke="#4f5b66" stroke-width="1.9" stroke-linecap="round" stroke-linejoin="round"><path d="M2 1.5L10 9L2 16.5"/></svg><div class="td" style="left:140px;top:737px">6</div><div class="td" style="left:192px;top:737px">(81) HB</div><div class="badge" style="top:753px">ACTIVE</div><div class="btn" style="left:1161px;top:744px;width:38px;height:40px"></div><svg class="ic" style="left:1173px;top:754px;width:15px;height:18px" viewBox="0 0 15 18" fill="none" stroke="#fff" stroke-width="1.9" stroke-linecap="round" stroke-linejoin="round"><rect x="1" y="3" width="13" height="14" rx="2.2"/><path d="M4.6 1V4.6M10.4 1V4.6M1 7.9H14"/></svg><div class="btn" style="left:1203px;top:744px;width:39px;height:40px"></div><svg class="ic" style="left:1212px;top:752px;width:22px;height:22px" viewBox="0 0 24 24" fill="none" stroke="#fff" stroke-width="2.0" stroke-linecap="round" stroke-linejoin="round"><path d="M4.5 8.5l7.5 7.5l7.5 -7.5"/></svg><div class="btn" style="left:1278px;top:744px;width:39px;height:40px"></div><svg class="ic" style="left:1284px;top:750px;width:27px;height:27px" viewBox="0 0 24 24" fill="none" stroke="#fff" stroke-width="1.8" stroke-linecap="round" stroke-linejoin="round"><path d="M12 5l0 14"/><path d="M5 12l14 0"/></svg><div class="cnt" style="left:1306px;top:739px">0</div><div class="btn" style="left:1374px;top:744px;width:39px;height:40px"></div><svg class="ic" style="left:1380px;top:750px;width:27px;height:27px" viewBox="0 0 24 24" fill="none" stroke="#fff" stroke-width="1.8" stroke-linecap="round" stroke-linejoin="round"><path d="M12 5l0 14"/><path d="M5 12l14 0"/></svg><div class="cnt" style="left:1401px;top:739px">0</div><div class="btn" style="left:1785px;top:744px;width:38px;height:40px"></div><svg class="ic" style="left:1790px;top:750px;width:27px;height:27px" viewBox="0 0 24 24" fill="none" stroke="#fff" stroke-width="1.8" stroke-linecap="round" stroke-linejoin="round"><path d="M12 5l0 14"/><path d="M5 12l14 0"/></svg><div class="btn" style="left:1860px;top:744px;width:39px;height:40px"></div><svg class="ic" style="left:1869px;top:753px;width:21px;height:21px" viewBox="0 0 24 24" fill="none" stroke="#fff" stroke-width="2.1" stroke-linecap="round" stroke-linejoin="round"><path d="M15 3v4a1 1 0 0 0 1 1h4"/><path d="M18 17h-7a2 2 0 0 1 -2 -2v-10a2 2 0 0 1 2 -2h4l5 5v7a2 2 0 0 1 -2 2z"/><path d="M16 17v2a2 2 0 0 1 -2 2h-7a2 2 0 0 1 -2 -2v-10a2 2 0 0 1 2 -2h2"/></svg><div class="btn" style="left:1902px;top:744px;width:66px;height:40px"></div><svg class="ic" style="left:1913px;top:754px;width:21px;height:21px" viewBox="0 0 24 24" fill="none" stroke="#fff" stroke-width="2.0" stroke-linecap="round" stroke-linejoin="round"><path d="M17 17h2a2 2 0 0 0 2 -2v-4a2 2 0 0 0 -2 -2h-14a2 2 0 0 0 -2 2v4a2 2 0 0 0 2 2h2"/><path d="M17 9v-4a2 2 0 0 0 -2 -2h-6a2 2 0 0 0 -2 2v4"/><path d="M7 15a2 2 0 0 1 2 -2h6a2 2 0 0 1 2 2v4a2 2 0 0 1 -2 2h-6a2 2 0 0 1 -2 -2z"/></svg><svg class="ic" style="left:1940px;top:752px;width:22px;height:22px" viewBox="0 0 24 24" fill="none" stroke="#fff" stroke-width="2.0" stroke-linecap="round" stroke-linejoin="round"><path d="M4.5 8.5l7.5 7.5l7.5 -7.5"/></svg><div class="btn" style="left:1971px;top:744px;width:39px;height:40px"></div><svg class="ic" style="left:1980px;top:753px;width:21px;height:21px" viewBox="0 0 24 24" fill="none" stroke="#fff" stroke-width="2.1" stroke-linecap="round" stroke-linejoin="round"><path d="M4 7l16 0"/><path d="M10 11l0 6"/><path d="M14 11l0 6"/><path d="M5 7l1 12a2 2 0 0 0 2 2h8a2 2 0 0 0 2 -2l1 -12"/><path d="M9 7v-3a1 1 0 0 1 1 -1h4a1 1 0 0 1 1 1v3"/></svg><div class="btn" style="left:2046px;top:744px;width:39px;height:40px"></div><svg class="ic" style="left:2054px;top:751px;width:25px;height:25px" viewBox="0 0 24 24" fill="none" stroke="#fff" stroke-width="1.8" stroke-linecap="round" stroke-linejoin="round"><path d="M12 5l0 14"/><path d="M18 11l-6 -6"/><path d="M6 11l6 -6"/></svg><div class="redbox"></div><div class="tbottom"></div><div class="ipp">Items per page:</div><div class="sel"></div><div class="seltxt">10</div><svg class="ic" style="left:1766px;top:819px;width:24px;height:24px" viewBox="0 0 24 24" fill="none" stroke="#212529" stroke-width="1.5" stroke-linecap="round" stroke-linejoin="round"><path d="M6 9l6 6l6 -6"/></svg><div class="results">1 - 6 of 6 results</div><svg class="ic" style="left:1959px;top:825px;width:13px;height:10px" viewBox="0 0 13 10" fill="none" stroke="#9aa0a6" stroke-width="1.5" stroke-linecap="round" stroke-linejoin="round"><path d="M5.5 1L1.5 5L5.5 9"/><path d="M11 1L7 5L11 9"/></svg><svg class="ic" style="left:1999px;top:824px;width:8px;height:11px" viewBox="0 0 8 11" fill="none" stroke="#9aa0a6" stroke-width="1.7" stroke-linecap="round" stroke-linejoin="round"><path d="M6.5 0.8L1.5 5.5L6.5 10.2"/></svg><div class="pgbtn">1</div><svg class="ic" style="left:2077px;top:824px;width:8px;height:11px" viewBox="0 0 8 11" fill="none" stroke="#9aa0a6" stroke-width="1.7" stroke-linecap="round" stroke-linejoin="round"><path d="M1.5 0.8L6.5 5.5L1.5 10.2"/></svg><svg class="ic" style="left:2112px;top:825px;width:13px;height:10px" viewBox="0 0 13 10" fill="none" stroke="#9aa0a6" stroke-width="1.5" stroke-linecap="round" stroke-linejoin="round"><path d="M1.5 1L5.5 5L1.5 9"/><path d="M7 1L11 5L7 9"/></svg>
</body></html>
